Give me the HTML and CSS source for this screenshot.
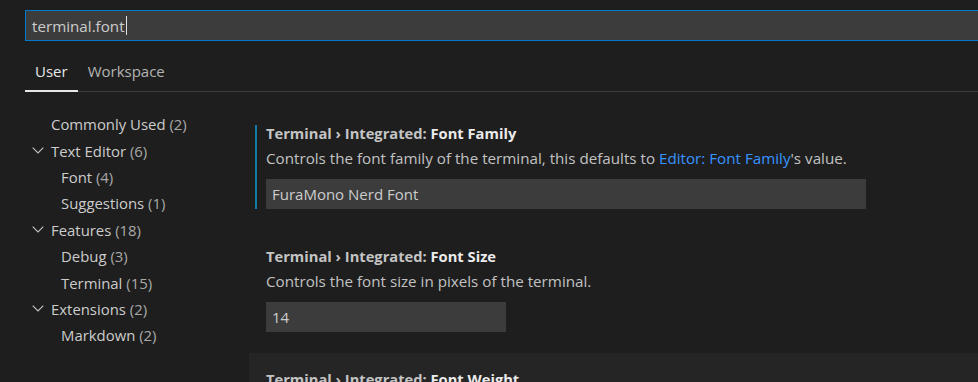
FILE: index.html
```html
<!DOCTYPE html>
<html lang="en">
<head>
    <meta charset="UTF-8">
    <meta name="viewport" content="width=device-width, initial-scale=1.0">
    <title>Settings</title>
    <link rel="stylesheet" href="styles.css">
</head>
<body>
    <div class="search">
        <span class="search-text">terminal.font</span><span class="caret"></span>
    </div>

    <div class="tabs">
        <div class="tab active">User</div>
        <div class="tab">Workspace</div>
    </div>

    <div class="main">
        <!-- table of contents -->
        <div class="toc">
            <div class="toc-row level0">Commonly Used <span class="count">(2)</span></div>
            <div class="toc-row level0"><span class="chevron"><svg width="12" height="7" viewBox="0 0 12 7"><path d="M0.7 0.7 L6 6 L11.3 0.7" fill="none" stroke="#c5c5c5" stroke-width="1.1"/></svg></span>Text Editor <span class="count">(6)</span></div>
            <div class="toc-row level1">Font <span class="count">(4)</span></div>
            <div class="toc-row level1">Suggestions <span class="count">(1)</span></div>
            <div class="toc-row level0"><span class="chevron"><svg width="12" height="7" viewBox="0 0 12 7"><path d="M0.7 0.7 L6 6 L11.3 0.7" fill="none" stroke="#c5c5c5" stroke-width="1.1"/></svg></span>Features <span class="count">(18)</span></div>
            <div class="toc-row level1">Debug <span class="count">(3)</span></div>
            <div class="toc-row level1">Terminal <span class="count">(15)</span></div>
            <div class="toc-row level0"><span class="chevron"><svg width="12" height="7" viewBox="0 0 12 7"><path d="M0.7 0.7 L6 6 L11.3 0.7" fill="none" stroke="#c5c5c5" stroke-width="1.1"/></svg></span>Extensions <span class="count">(2)</span></div>
            <div class="toc-row level1">Markdown <span class="count">(2)</span></div>
        </div>

        <div class="settings">
            <div class="setting">
                <div class="setting-body focused">
                    <div class="setting-title">Terminal › Integrated: <span class="key">Font Family</span></div>
                    <div class="setting-desc">Controls the font family of the terminal, this defaults to <a href="#">Editor: Font Family</a>'s value.</div>
                    <div class="setting-input wide">FuraMono Nerd Font</div>
                </div>
            </div>
            <div class="setting">
                <div class="setting-body">
                    <div class="setting-title">Terminal › Integrated: <span class="key">Font Size</span></div>
                    <div class="setting-desc">Controls the font size in pixels of the terminal.</div>
                    <div class="setting-input narrow">14</div>
                </div>
            </div>
            <div class="setting hovered">
                <div class="setting-body">
                    <div class="setting-title">Terminal › Integrated: <span class="key">Font Weight</span></div>
                </div>
            </div>
        </div>
    </div>
</body>
</html>
```

FILE: styles.css
```css
body {
    margin: 0;
    padding: 0;
    background-color: #1e1e1e;
    color: #cccccc;
    font-family: "Open Sans", "Noto Sans", sans-serif;
    overflow: hidden;
}

/* search box */
.search {
    margin: 10px 0 0 25px;
    height: 29px;
    width: 1000px;
    background-color: #3c3c3c;
    border: 1px solid #007acc;
    display: flex;
    align-items: center;
    padding-left: 6px;
    font-size: 15.2px;
    color: #cccccc;
}
.caret {
    display: inline-block;
    width: 1px;
    height: 19px;
    background: #e0e0e0;
    margin-left: 1px;
}

/* tabs */
.tabs {
    margin: 19px 0 0 25px;
    display: flex;
    border-bottom: 1px solid #3c3c3c;
}
.tab {
    font-size: 15px;
    line-height: 22px;
    padding: 0 0 9px;
    margin-right: 10px;
    color: #b4b4b4;
}
.tab.active {
    color: #e7e7e7;
    padding: 0 10px 7px;
    border-bottom: 2px solid #e7e7e7;
    margin-bottom: -1px;
}

.main {
    display: flex;
}

/* table of contents */
.toc {
    width: 249px;
    flex-shrink: 0;
    padding-top: 19px;
}
.toc-row {
    height: 26.4px;
    display: flex;
    align-items: center;
    font-size: 14.9px;
    color: #cccccc;
    white-space: pre;
}
.toc-row.level0 {
    padding-left: 51px;
}
.toc-row.level1 {
    padding-left: 61px;
}
.chevron {
    width: 12px;
    height: 7px;
    margin-left: -19px;
    margin-right: 7px;
    display: flex;
}
.count {
    color: #a9a9a9;
}

/* settings list */
.settings {
    flex: 1;
    padding-top: 15px;
}
.setting {
    padding: 18px 0 21px;
}
.setting.hovered {
    background-color: #252526;
}
.setting-body {
    margin-left: 6px;
    padding-left: 9px;
    border-left: 2px solid transparent;
}
.setting-body.focused {
    border-left-color: #117ca2;
}
.setting-title {
    font-size: 14.7px;
    line-height: 16px;
    font-weight: bold;
    color: #c4c4c4;
}
.setting-title .key {
    color: #ebebeb;
}
.setting-desc {
    margin-top: 8px;
    font-size: 15.2px;
    line-height: 18px;
    color: #c2c2c2;
}
.setting-desc a {
    color: #3794ff;
    text-decoration: none;
}
.setting-input {
    margin-top: 12px;
    height: 30px;
    box-sizing: border-box;
    background-color: #3c3c3c;
    padding-left: 6px;
    display: flex;
    align-items: center;
    font-size: 15px;
    color: #cccccc;
}
.setting-input.wide {
    width: 600px;
}
.setting-input.narrow {
    width: 240px;
}
```
